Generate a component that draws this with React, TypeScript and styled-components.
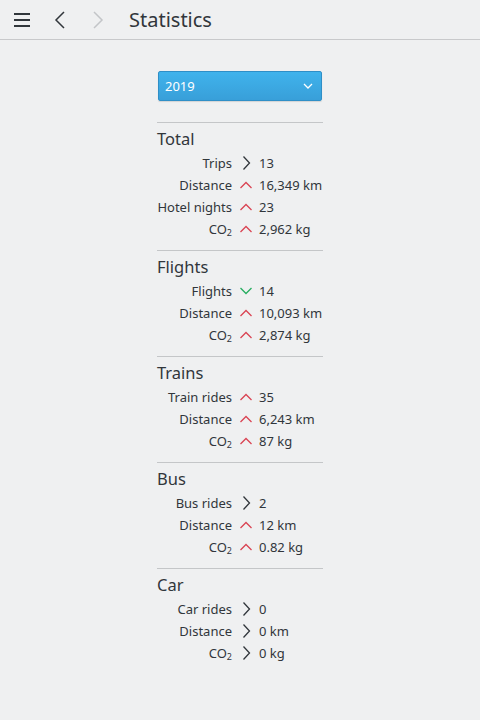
import React from "react";
import styled, { createGlobalStyle } from "styled-components";

const GlobalStyle = createGlobalStyle`
  html, body {
    margin: 0;
    padding: 0;
    background: #eff0f1;
  }
  body {
    font-family: "Noto Sans", "DejaVu Sans", sans-serif;
    color: #31363b;
  }
`;

type Trend = "same" | "up" | "down";

interface StatRow {
  label: React.ReactNode;
  trend: Trend;
  value: string;
}

interface Section {
  title: string;
  rows: StatRow[];
}

const CO2 = (
  <>
    CO<sub>2</sub>
  </>
);

const SECTIONS: Section[] = [
  {
    title: "Total",
    rows: [
      { label: "Trips", trend: "same", value: "13" },
      { label: "Distance", trend: "up", value: "16,349 km" },
      { label: "Hotel nights", trend: "up", value: "23" },
      { label: CO2, trend: "up", value: "2,962 kg" },
    ],
  },
  {
    title: "Flights",
    rows: [
      { label: "Flights", trend: "down", value: "14" },
      { label: "Distance", trend: "up", value: "10,093 km" },
      { label: CO2, trend: "up", value: "2,874 kg" },
    ],
  },
  {
    title: "Trains",
    rows: [
      { label: "Train rides", trend: "up", value: "35" },
      { label: "Distance", trend: "up", value: "6,243 km" },
      { label: CO2, trend: "up", value: "87 kg" },
    ],
  },
  {
    title: "Bus",
    rows: [
      { label: "Bus rides", trend: "same", value: "2" },
      { label: "Distance", trend: "up", value: "12 km" },
      { label: CO2, trend: "up", value: "0.82 kg" },
    ],
  },
  {
    title: "Car",
    rows: [
      { label: "Car rides", trend: "same", value: "0" },
      { label: "Distance", trend: "same", value: "0 km" },
      { label: CO2, trend: "same", value: "0 kg" },
    ],
  },
];

const Page = styled.div`
  width: 480px;
  height: 720px;
  display: flex;
  flex-direction: column;
  background: #eff0f1;
`;

const Header = styled.header`
  height: 39px;
  border-bottom: 1px solid #c8c9cb;
  display: flex;
  align-items: center;
  padding: 0 0 0 12px;
  box-sizing: content-box;
`;

const ToolButton = styled.div`
  width: 20px;
  height: 20px;
  display: flex;
  align-items: center;
  justify-content: center;
  margin-right: 18px;
`;

const Title = styled.h1`
  margin: 0 0 0 3px;
  font-size: 20px;
  font-weight: 400;
  color: #31363b;
  line-height: 1;
`;

const Body = styled.main`
  display: flex;
  justify-content: center;
  padding-top: 31px;
`;

const Column = styled.div`
  width: 166px;
  display: flex;
  flex-direction: column;
`;

const Combo = styled.div`
  margin: 0 1px 21px 1px;
  height: 28px;
  border: 1px solid #2f8fc7;
  border-radius: 2px;
  background: linear-gradient(#40b3ec, #389fd9);
  display: flex;
  align-items: center;
  justify-content: space-between;
  padding: 0 8px 0 6px;
  color: #ffffff;
  font-size: 13px;
  box-shadow: 0 1px 1px rgba(0, 0, 0, 0.12);
`;

const Block = styled.section`
  border-top: 1px solid #c4c6c8;
  padding: 5px 0 10px 0;
  display: flex;
  flex-direction: column;
`;

const Heading = styled.h2`
  margin: 0 0 2px 0;
  font-size: 16.5px;
  font-weight: 400;
  line-height: 22px;
  color: #31363b;
`;

const Row = styled.div`
  display: grid;
  grid-template-columns: 75px 27px 1fr;
  height: 22px;
  align-items: center;
  font-size: 13px;
`;

const Label = styled.span`
  text-align: right;
  white-space: nowrap;
  sub {
    font-size: 9px;
    vertical-align: -2px;
    line-height: 0;
  }
`;

const IconCell = styled.span`
  display: flex;
  justify-content: center;
  align-items: center;
  padding-left: 1px;
`;

const Value = styled.span`
  white-space: nowrap;
`;

const TrendIcon: React.FC<{ trend: Trend }> = ({ trend }) => {
  if (trend === "up") {
    return (
      <svg width="14" height="10" viewBox="0 0 14 10">
        <path d="M1.5 8 L7 2.5 L12.5 8" fill="none" stroke="#da4453" strokeWidth="1.3" />
      </svg>
    );
  }
  if (trend === "down") {
    return (
      <svg width="14" height="10" viewBox="0 0 14 10">
        <path d="M1.5 2 L7 7.5 L12.5 2" fill="none" stroke="#27ae60" strokeWidth="1.3" />
      </svg>
    );
  }
  return (
    <svg width="10" height="16" viewBox="0 0 10 16">
      <path d="M2.5 1.5 L8.5 8 L2.5 14.5" fill="none" stroke="#31363b" strokeWidth="1.3" />
    </svg>
  );
};

export default function App() {
  return (
    <>
      <GlobalStyle />
      <Page>
        <Header>
          <ToolButton>
            <svg width="18" height="16" viewBox="0 0 18 16">
              <rect x="1" y="1" width="16" height="2" fill="#31363b" />
              <rect x="1" y="7" width="16" height="2" fill="#31363b" />
              <rect x="1" y="13" width="16" height="2" fill="#31363b" />
            </svg>
          </ToolButton>
          <ToolButton>
            <svg width="12" height="18" viewBox="0 0 12 18">
              <path d="M10 1 L2 9 L10 17" fill="none" stroke="#31363b" strokeWidth="1.5" />
            </svg>
          </ToolButton>
          <ToolButton>
            <svg width="12" height="18" viewBox="0 0 12 18">
              <path d="M2 1 L10 9 L2 17" fill="none" stroke="#c3c5c8" strokeWidth="1.5" />
            </svg>
          </ToolButton>
          <Title>Statistics</Title>
        </Header>
        <Body>
          <Column>
            <Combo>
              <span>2019</span>
              <svg width="10" height="6" viewBox="0 0 10 6">
                <path d="M1 1 L5 5 L9 1" fill="none" stroke="#ffffff" strokeWidth="1.3" />
              </svg>
            </Combo>
            {SECTIONS.map((section) => (
              <Block key={section.title}>
                <Heading>{section.title}</Heading>
                {section.rows.map((row, i) => (
                  <Row key={i}>
                    <Label>{row.label}</Label>
                    <IconCell>
                      <TrendIcon trend={row.trend} />
                    </IconCell>
                    <Value>{row.value}</Value>
                  </Row>
                ))}
              </Block>
            ))}
          </Column>
        </Body>
      </Page>
    </>
  );
}
